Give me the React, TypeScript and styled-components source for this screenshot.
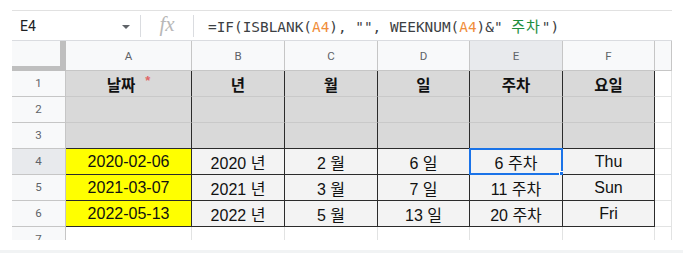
import React from "react";
import styled, { createGlobalStyle } from "styled-components";

const GlobalStyle = createGlobalStyle`
  html, body { margin: 0; padding: 0; background: #ffffff; }
  body { font-family: "Liberation Sans", "Noto Sans CJK KR", sans-serif; }
  * { box-sizing: border-box; }
`;

const DARK = "#2b2b2b";
const LIGHT = "#c6c6c6";
const GRID = "#e2e3e3";

const Page = styled.div`
  width: 683px;
  height: 253px;
  display: flex;
  flex-direction: column;
`;

const Sheet = styled.div`
  margin: 10px 11px 0 12px;
  width: 660px;
  display: flex;
  flex-direction: column;
`;

const FormulaBar = styled.div`
  height: 31px;
  border-top: 1px solid #e1e1e1;
  border-bottom: 1px solid #dadce0;
  display: flex;
  align-items: center;
`;

const NameBox = styled.div`
  width: 128px;
  padding-left: 8px;
  padding-right: 10px;
  display: flex;
  align-items: center;
  justify-content: space-between;
  font-family: Roboto, "Liberation Sans", sans-serif;
  font-size: 14px;
  color: #202124;
`;

const Caret = styled.span`
  width: 0;
  height: 0;
  border-left: 4px solid transparent;
  border-right: 4px solid transparent;
  border-top: 4px solid #5f6368;
  margin-top: 2px;
`;

const Divider = styled.div`
  width: 1px;
  height: 22px;
  background: #dadce0;
`;

const Fx = styled.div`
  width: 52px;
  text-align: center;
  font-family: "Liberation Serif", serif;
  font-style: italic;
  font-size: 21px;
  color: #b8b8b8;
  line-height: 1;
  padding-bottom: 3px;
`;

const Formula = styled.div`
  padding-left: 14px;
  font-family: "DejaVu Sans Mono", "Noto Sans CJK KR", monospace;
  font-size: 14.4px;
  color: #3c4043;
  white-space: pre;
`;

const Ref = styled.span`
  color: #f08d3a;
`;

const Str = styled.span`
  color: #1e8e3e;
  font-family: "Noto Sans CJK KR", sans-serif;
  font-size: 15px;
  letter-spacing: 1px;
  margin-right: 1px;
`;

const Grid = styled.div`
  height: 199px;
  overflow: hidden;
  display: grid;
  grid-template-columns: 54px 126px 93px 93px 92px 93px 92px 17px;
  grid-template-rows: 30px repeat(7, 26px);
`;

const Corner = styled.div`
  background: #f8f9fa;
  border-right: 6px solid #bfbfbf;
  border-bottom: 5px solid #bfbfbf;
`;

const ColHead = styled.div<{ $active?: boolean }>`
  background: ${(p) => (p.$active ? "#e8eaed" : "#f8f9fa")};
  border-right: 1px solid ${LIGHT};
  border-bottom: 1px solid ${LIGHT};
  display: flex;
  align-items: center;
  justify-content: center;
  font-family: Roboto, "Liberation Sans", sans-serif;
  font-size: 11.5px;
  color: #5f6368;
`;

const RowHead = styled(ColHead)`
  padding-bottom: 1px;
`;

const Cell = styled.div<{
  $bg: string;
  $bold?: boolean;
  $right: string;
  $bottom: string;
}>`
  position: relative;
  background: ${(p) => p.$bg};
  border-right: 1px solid ${(p) => p.$right};
  border-bottom: 1px solid ${(p) => p.$bottom};
  display: flex;
  align-items: center;
  justify-content: center;
  font-family: "Liberation Sans", "Noto Sans CJK KR", sans-serif;
  font-size: ${(p) => (p.$bold ? "15.5px" : "16px")};
  font-weight: ${(p) => (p.$bold ? 700 : 400)};
  color: #111;
  white-space: nowrap;
`;

const Required = styled.span`
  color: #e06666;
  font-family: "Liberation Sans", sans-serif;
  font-size: 13px;
  font-weight: 700;
  margin-left: 10px;
  position: relative;
  top: -3px;
`;

const Selection = styled.div`
  position: absolute;
  left: -1px;
  top: -1px;
  right: -1px;
  bottom: -1px;
  border: 2px solid #1a73e8;
  pointer-events: none;
`;

const Handle = styled.div`
  position: absolute;
  right: -5px;
  bottom: -5px;
  width: 7px;
  height: 7px;
  background: #1a73e8;
  border: 1px solid #ffffff;
`;

const Footer = styled.div`
  margin-top: auto;
  height: 3px;
  background: #f1f3f4;
`;

const cols = ["A", "B", "C", "D", "E", "F", ""];

const data: string[][] = [
  ["날짜", "년", "월", "일", "주차", "요일"],
  ["", "", "", "", "", ""],
  ["", "", "", "", "", ""],
  ["2020-02-06", "2020 년", "2 월", "6 일", "6 주차", "Thu"],
  ["2021-03-07", "2021 년", "3 월", "7 일", "11 주차", "Sun"],
  ["2022-05-13", "2022 년", "5 월", "13 일", "20 주차", "Fri"],
  ["", "", "", "", "", ""],
];

const App = () => {
  return (
    <Page>
      <GlobalStyle />
      <Sheet>
        <FormulaBar>
          <NameBox>
            E4
            <Caret />
          </NameBox>
          <Divider />
          <Fx>fx</Fx>
          <Divider />
          <Formula>
            =IF(ISBLANK(<Ref>A4</Ref>), "", WEEKNUM(<Ref>A4</Ref>)&" <Str>주차</Str>")
          </Formula>
        </FormulaBar>
        <Grid>
          <Corner />
          {cols.map((c, i) => (
            <ColHead key={"h" + i} $active={c === "E"}>
              {c}
            </ColHead>
          ))}
          {data.map((row, r) => {
            const inRange = r < 6;
            const header = r < 3;
            return (
              <React.Fragment key={"r" + r}>
                <RowHead $active={r === 3}>{r + 1}</RowHead>
                {row.map((v, c) => {
                  let bg = "#ffffff";
                  if (inRange) bg = header ? "#d9d9d9" : c === 0 ? "#ffff00" : "#f3f3f3";
                  const right = inRange ? DARK : GRID;
                  const bottom = !inRange ? GRID : r >= 2 ? DARK : "#c9c9c9";
                  return (
                    <Cell key={c} $bg={bg} $bold={r === 0} $right={right} $bottom={bottom}>
                      {v}
                      {r === 0 && c === 0 && <Required>*</Required>}
                      {r === 3 && c === 4 && (
                        <Selection>
                          <Handle />
                        </Selection>
                      )}
                    </Cell>
                  );
                })}
                <Cell $bg="#ffffff" $right={GRID} $bottom={GRID} />
              </React.Fragment>
            );
          })}
        </Grid>
      </Sheet>
      <Footer />
    </Page>
  );
};

export default App;
